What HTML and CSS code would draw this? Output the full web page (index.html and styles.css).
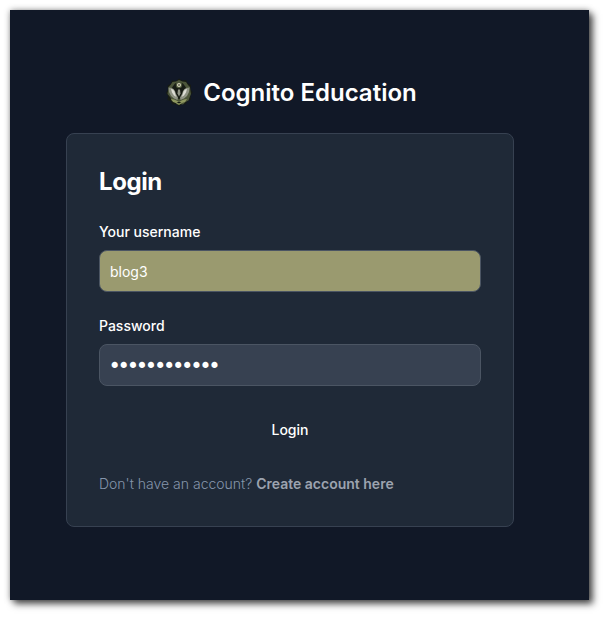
FILE: index.html
```html
<!DOCTYPE html>
<html lang="en">
<head>
<meta charset="utf-8">
<title>Cognito Education</title>
<link rel="stylesheet" href="styles.css">
</head>
<body>
<main class="window">
  <a class="brand" href="#">
    <svg class="brand-logo" viewBox="0 0 32 32" aria-hidden="true">
      <path class="l-dark" d="M16 1.500l3 2 4-.5 1.500 3 3.500 2-.5 4 2 3.500-2 3 .5 4-3.500 1.500-2 3.500-3.500-.5-3 2.500-3-2.500-3.500.5-2-3.500L4.500 23l.5-4-2-3 2-3.500-.5-4 3.500-2L9 3.500l4 .5z"/>
      <path class="l-olive" d="M16 3l3.500 1.500 3.500.5 2 3 2 2 .5 4 .5 3-1.500 3.500-1 3-3 1.500-2.500 2.500-3-.5-3 .5-2.500-2.500-3-1.500-1-3L4.500 17l.5-3 .5-4 2-2L9.500 5 13 4.500z"/>
      <path class="l-dark" d="M16 5l4 1.500 3 4-1 6-2.500 4-3.500 1.500-3.500-1.500-2.500-4-1-6 3-4z"/>
      <path class="l-pale" d="M5.500 10.500l3 .5 2 1 1.500 2 1 3 2 3.500-.5 2.500-3.500-1.500-3-2.500-2-4z"/>
      <path class="l-pale" d="M26.500 10.500l-3 .5-2 1-1.500 2-1 3-2 3.500.5 2.500 3.500-1.500 3-2.500 2-4z"/>
      <path class="l-white" d="M8 12l2 .5 1.500 2 1 3.500 1 2-2.500-1.500-2-3z"/>
      <path class="l-white" d="M24 12l-2 .5-1.500 2-1 3.500-1 2 2.500-1.500 2-3z"/>
      <circle class="l-olive" cx="16" cy="8" r="3.200"/>
      <circle class="l-cream" cx="16" cy="8" r="2"/>
      <circle class="l-dark" cx="16" cy="8" r=".8"/>
      <path class="l-pale" d="M15 12.500h2l.5 4-1.500 3-1.500-3z"/>
      <path class="l-lime" d="M8 22l3 .5 2.500 1 2.500 1.500 2.500-1.500 2.500-1 3-.5-2 3-3 1-3 2-3-2-3-1z"/>
      <path class="l-dark" d="M13.500 25h5l-2.500 1.500z"/>
    </svg>
    <span>Cognito Education</span>
  </a>
  <section class="card">
    <h1 class="card-title">Login</h1>
    <form class="form">
      <div class="field">
        <label class="label" for="username">Your username</label>
        <input class="input input-autofilled" id="username" type="text" value="blog3">
      </div>
      <div class="field">
        <label class="label" for="password">Password</label>
        <input class="input input-password" id="password" type="password" value="blog3blog3bl">
      </div>
      <button class="submit" type="button">Login</button>
      <p class="signup">Don't have an account? <a class="signup-link" href="#">Create account here</a></p>
    </form>
  </section>
</main>
</body>
</html>
```
FILE: styles.css
```css
* { box-sizing: border-box; }
html, body { margin: 0; }
body {
  background: #fff;
  padding: 10px 18px 18px 10px;
  font-family: Inter, "Liberation Sans", sans-serif;
}
.window {
  height: 590px;
  background: #111827;
  padding: 67px 19px 0 0;
  display: flex;
  flex-direction: column;
  align-items: center;
  box-shadow: 0 0 6px rgba(0, 0, 0, .35), 4px 4px 7px rgba(0, 0, 0, .65);
}
.brand {
  display: flex;
  align-items: center;
  gap: 8px;
  margin-bottom: 24px;
  color: #fff;
  font-size: 24px;
  line-height: 32px;
  font-weight: 600;
  text-decoration: none;
}
.brand-logo { width: 32px; height: 32px; display: block; }
.l-dark { fill: #171b14; }
.l-olive { fill: #4c553a; }
.l-pale { fill: #8f9384; }
.l-white { fill: #dcdcd4; }
.l-cream { fill: #d8d7bc; }
.l-lime { fill: #8f9860; }
.card {
  width: 448px;
  padding: 32px;
  background: #1f2937;
  border: 1px solid #374151;
  border-radius: 8px;
}
.card-title {
  margin: 0 0 24px;
  color: #fff;
  font-size: 24px;
  line-height: 32px;
  font-weight: 700;
  letter-spacing: -.4px;
}
.form { display: flex; flex-direction: column; gap: 24px; }
.label {
  display: block;
  margin-bottom: 8px;
  color: #fff;
  font-size: 14px;
  line-height: 20px;
  font-weight: 500;
}
.input {
  display: block;
  width: 100%;
  height: 42px;
  padding: 10px;
  background: #374151;
  border: 1px solid #4b5563;
  border-radius: 8px;
  color: #fff;
  font-family: inherit;
  font-size: 14px;
  line-height: 20px;
  outline: none;
}
.input-autofilled { background: #9a9a6f; }
.input-password {
  padding: 2px 8.5px 0;
  font-family: "DejaVu Sans", sans-serif;
  font-size: 21px;
  line-height: 38px;
  letter-spacing: -3.31px;
}
.submit {
  height: 40px;
  padding: 10px 20px;
  background: transparent;
  border: 0;
  border-radius: 8px;
  color: #fff;
  font-family: inherit;
  font-size: 14px;
  line-height: 20px;
  font-weight: 500;
}
.signup {
  margin: 0;
  color: #8595ab;
  font-size: 14px;
  line-height: 20px;
  font-weight: 300;
}
.signup-link {
  color: #9ca3af;
  font-weight: 580;
  text-decoration: none;
}
```
